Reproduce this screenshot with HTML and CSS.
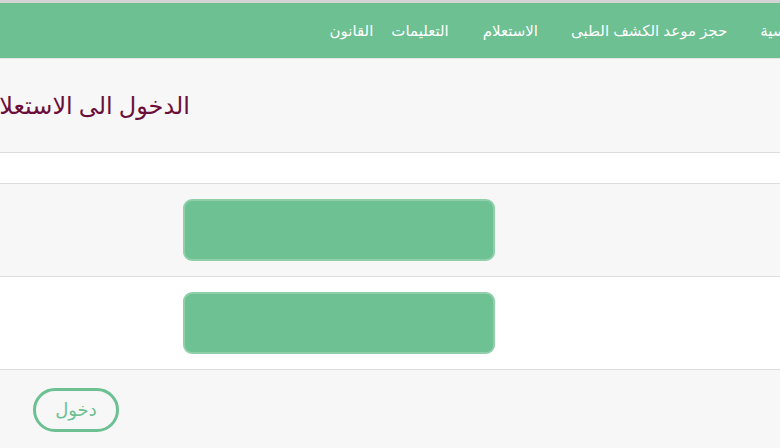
FILE: index.html
```html
<!DOCTYPE html>
<html lang="ar">
<head>
<meta charset="utf-8">
<title>الدخول الى الاستعلام</title>
<link rel="stylesheet" href="styles.css">
</head>
<body>
<div class="topline"></div>
<nav class="navbar">
  <ul class="menu">
    <li class="item home">الرئيسية</li>
    <li class="item book">حجز موعد الكشف الطبى</li>
    <li class="item query">الاستعلام</li>
    <li class="item guide">التعليمات</li>
    <li class="item law">القانون</li>
  </ul>
</nav>
<main class="panel">
  <div class="panel-head">
    <h1 class="title">الدخول الى الاستعلام</h1>
  </div>
  <div class="row row-empty"></div>
  <div class="row row-gray">
    <input class="field" type="text" aria-label="الرقم القومى">
  </div>
  <div class="row row-white">
    <input class="field" type="password" aria-label="كلمة المرور">
  </div>
  <div class="row row-foot">
    <button class="btn" type="button">دخول</button>
  </div>
</main>
</body>
</html>
```

FILE: styles.css
```css
html, body {
  margin: 0;
  padding: 0;
  background: #f7f7f7;
  overflow: hidden;
  font-family: "Liberation Sans", "DejaVu Sans", "Noto Sans", sans-serif;
}

.topline {
  height: 3px;
  background: #d4d4d4;
}

.navbar {
  height: 55px;
  background: #6cc091;
  border-bottom: 1px solid #e6e6e6;
  overflow: hidden;
}

.menu {
  list-style: none;
  margin: 0;
  padding: 0;
  direction: rtl;
  display: flex;
  align-items: center;
  height: 55px;
  margin-right: -32px;
  white-space: nowrap;
}

.item {
  color: #ffffff;
  font-size: 15px;
}

.home { margin-left: 33px; }
.book { margin-left: 33px; }
.query { margin-left: 34px; }
.guide { margin-left: 18px; }

.panel-head {
  height: 93px;
  display: flex;
  align-items: center;
  border-bottom: 1px solid #dcdcdc;
}

.title {
  margin: 0;
  width: 190px;
  direction: rtl;
  overflow: hidden;
  white-space: nowrap;
  font-weight: normal;
  font-size: 24px;
  color: #6b0f3a;
  font-family: "Liberation Serif", "DejaVu Sans", serif;
}

.row {
  border-bottom: 1px solid #dcdcdc;
}

.row-empty {
  height: 30px;
  background: #ffffff;
}

.row-gray {
  height: 92px;
  background: #f7f7f7;
  display: flex;
  align-items: center;
}

.row-white {
  height: 92px;
  background: #ffffff;
  display: flex;
  align-items: center;
}

.field {
  box-sizing: border-box;
  width: 312px;
  height: 62px;
  margin-left: 183px;
  background: #6dc192;
  border: 2px solid #8fd0aa;
  border-radius: 9px;
  padding: 0;
  outline: none;
}

.row-foot {
  border-bottom: none;
  height: 80px;
  padding-top: 18px;
  box-sizing: border-box;
}

.btn {
  box-sizing: border-box;
  margin-left: 33px;
  width: 86px;
  height: 44px;
  border: 3px solid #6cc091;
  border-radius: 22px;
  background: transparent;
  color: #6cc091;
  font-size: 18px;
  font-family: "Liberation Sans", "DejaVu Sans", sans-serif;
  padding: 0;
}
```
